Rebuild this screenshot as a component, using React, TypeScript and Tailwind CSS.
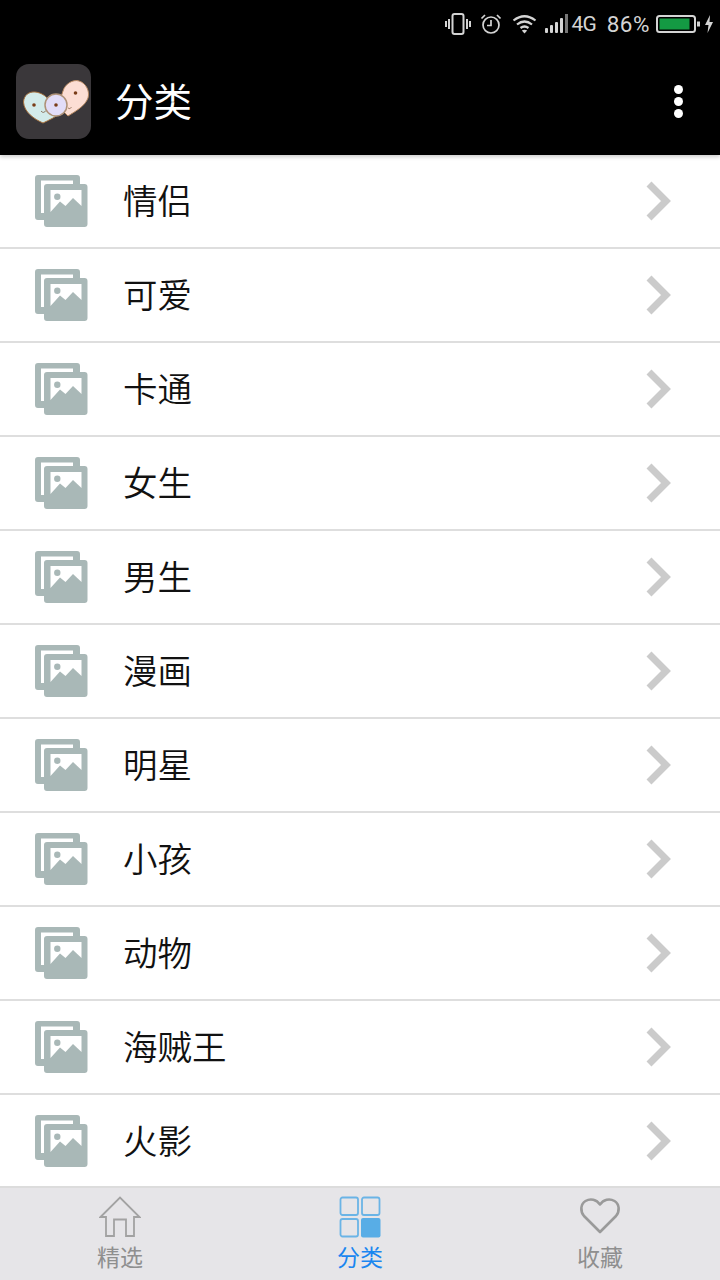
const categories = ['情侣', '可爱', '卡通', '女生', '男生', '漫画', '明星', '小孩', '动物', '海贼王', '火影'];

function PhotosIcon() {
  return (
    <svg width="53" height="53" viewBox="0 0 53 53" className="shrink-0">
      <path fillRule="evenodd" fill="#a9b8b7" d="M3 0H42a3 3 0 0 1 3 3V9H38V5.500H6V38H9V45H3a3 3 0 0 1-3-3V3a3 3 0 0 1 3-3Z" />
      <path fillRule="evenodd" fill="#a9b8b7" d="M12 9H49.500a3 3 0 0 1 3 3V49a3 3 0 0 1-3 3H12a3 3 0 0 1-3-3V12a3 3 0 0 1 3-3ZM15.500 15V37L25 26.500L30.500 31L38 23L46.500 31V15Z" />
      <circle cx="22.300" cy="21.700" r="3.200" fill="#a9b8b7" />
    </svg>
  );
}

function Chevron() {
  return (
    <svg width="28" height="40" viewBox="0 0 28 40" className="shrink-0">
      <path d="M4 3L21 20L4 37" fill="none" stroke="#cbcbcb" strokeWidth="7" />
    </svg>
  );
}

function AppLogo() {
  return (
    <div className="flex h-[75px] w-[75px] shrink-0 items-center justify-center rounded-[13px] bg-[#3a373a]">
      <svg width="75" height="75" viewBox="0 0 75 75">
        <path d="M47 27C49 20 57 15 63 17C70 19 74 27 72 34C69 42 60 47 52 52L42 42Z" fill="#fcded4" stroke="#b98a62" strokeWidth="1" />
        <circle cx="59.500" cy="29" r="1.800" fill="#7a3d18" />
        <path d="M7.500 38C8 31 13 27.500 19 28C25 28.500 30 32 33 36L46 48C40 53 33 56 27 59C18 55 8 48 7.500 38Z" fill="#d3ebea" stroke="#a9733f" strokeWidth="1" />
        <circle cx="18" cy="41" r="1.800" fill="#7a3d18" />
        <path d="M25 47Q27.500 50 30 46.500" fill="none" stroke="#7a5a40" strokeWidth="0.800" />
        <circle cx="40" cy="41" r="11" fill="#e2ddf8" stroke="#ae9278" strokeWidth="1.500" />
        <circle cx="40" cy="41" r="1.800" fill="#7a3d18" />
        <path d="M52 44Q54 46 55.500 43" fill="none" stroke="#8a6a50" strokeWidth="0.800" />
      </svg>
    </div>
  );
}

function StatusBar() {
  return (
    <div className="flex h-[48px] items-center justify-end pr-[6px] font-['Roboto',sans-serif] text-[#d4d4d4]">
      <svg width="26" height="24" viewBox="0 0 26 24" className="mr-[9px]" fill="none" stroke="#d4d4d4">
        <rect x="7.500" y="2" width="11" height="20" rx="2" strokeWidth="2" />
        <path d="M4 7V17M1 9V15M22 7V17M25 9V15" strokeWidth="2" />
      </svg>
      <svg width="22" height="22" viewBox="0 0 22 22" className="mr-[10px]" fill="none" stroke="#d4d4d4" strokeWidth="1.700">
        <circle cx="11" cy="12" r="8" />
        <path d="M11 7V12.500H7M1.500 5.500L5 2M20.500 5.500L17 2" />
      </svg>
      <svg width="25" height="20" viewBox="0 0 25 20" className="mr-[8px]" fill="none" stroke="#d4d4d4" strokeWidth="2.200">
        <path d="M1.500 6.500Q12.500 -2 23.500 6.500M5 10.500Q12.500 4.500 20 10.500M8.500 14Q12.500 11 16.500 14" />
        <path d="M9.800 16.500L12.500 19.500L15.200 16.500Q12.500 15 9.800 16.500Z" fill="#d4d4d4" stroke="none" />
      </svg>
      <svg width="23" height="20" viewBox="0 0 23 20" className="mr-[4px]" fill="#d4d4d4">
        <rect x="0" y="14" width="3" height="5" rx="1" />
        <rect x="5" y="11" width="3" height="8" rx="1" />
        <rect x="10" y="8" width="3" height="11" rx="1" />
        <rect x="15" y="4" width="3" height="15" rx="1" />
        <rect x="20" y="0" width="3" height="19" fill="#777777" />
      </svg>
      <span className="mr-[11px] text-[21px] leading-none tracking-[-1px]">4G</span>
      <span className="mr-[6px] text-[22.500px] leading-none tracking-[0.500px]">86%</span>
      <svg width="44" height="20" viewBox="0 0 44 20" className="mr-[4px]">
        <rect x="1" y="2" width="38" height="16" rx="2.500" fill="none" stroke="#d4d4d4" strokeWidth="2" />
        <rect x="3.500" y="4.500" width="30" height="11" fill="#149a43" />
        <rect x="41" y="7.500" width="3" height="5" fill="#d4d4d4" />
      </svg>
      <svg width="10" height="20" viewBox="0 0 10 20" fill="#d4d4d4">
        <path d="M6 1L1 11H4.500L3.500 19L9 8H5.500Z" />
      </svg>
    </div>
  );
}

function Header() {
  return (
    <header className="relative z-10 h-[155px] shrink-0 bg-black shadow-[0_2px_4px_rgba(0,0,0,0.2)]">
      <StatusBar />
      <div className="flex h-[107px] items-center pl-[16px] pr-[37px]">
        <AppLogo />
        <h1 className="mb-[4px] ml-[24px] text-[38.500px] font-normal leading-none text-white">分类</h1>
        <div className="ml-auto flex flex-col gap-[3px]">
          <span className="h-[9px] w-[9px] rounded-full bg-white" />
          <span className="h-[9px] w-[9px] rounded-full bg-white" />
          <span className="h-[9px] w-[9px] rounded-full bg-white" />
        </div>
      </div>
    </header>
  );
}

function CategoryRow({ name }: { name: string }) {
  return (
    <li className="flex h-[94px] shrink-0 items-center border-b-2 border-[#dedede] pl-[35px] pr-[47px]">
      <PhotosIcon />
      <span className="mb-[4px] ml-[35px] text-[34.500px] font-[350] leading-none text-[#111111]">{name}</span>
      <span className="ml-auto">
        <Chevron />
      </span>
    </li>
  );
}

function TabBar() {
  return (
    <nav className="grid h-[94px] shrink-0 grid-cols-3 border-t-2 border-[#dcdcdc] bg-[#e6e5e8]">
      <div className="flex flex-col items-center pt-[8px]">
        <svg width="42" height="42" viewBox="0 0 42 42" fill="none" stroke="#a2a2a2" strokeWidth="1.800">
          <path d="M1.500 21L21 1.500L40.500 21H35V40H27V23.500H15V40H7V21Z" />
        </svg>
        <span className="mt-[5px] text-[23px] leading-[27px] text-[#8f8f8f]">精选</span>
      </div>
      <div className="flex flex-col items-center pt-[8px]">
        <svg width="42" height="42" viewBox="0 0 42 42" fill="none" stroke="#6ab4e6" strokeWidth="1.800">
          <rect x="1.500" y="1.500" width="17.500" height="17.500" rx="2" />
          <rect x="23" y="1.500" width="17.500" height="17.500" rx="2" />
          <rect x="1.500" y="23" width="17.500" height="17.500" rx="2" />
          <rect x="22" y="22" width="19.500" height="19.500" rx="2" fill="#58ade6" stroke="none" />
        </svg>
        <span className="mt-[5px] text-[23px] leading-[27px] text-[#1a86f0]">分类</span>
      </div>
      <div className="flex flex-col items-center pt-[8px]">
        <svg width="42" height="42" viewBox="0 0 42 42" fill="none" stroke="#9a9a9a" strokeWidth="2.600">
          <path d="M21 36L5 20C1 15 1.500 8 6.500 5C11.500 2 17.500 3.500 21 8.500C24.500 3.500 30.500 2 35.500 5C40.500 8 41 15 37 20Z" strokeLinejoin="round" />
        </svg>
        <span className="mt-[5px] text-[23px] leading-[27px] text-[#8f8f8f]">收藏</span>
      </div>
    </nav>
  );
}

export default function App() {
  return (
    <div className="flex h-[1280px] w-[720px] flex-col overflow-hidden bg-white font-['Noto_Sans_CJK_SC','Noto_Sans',sans-serif]">
      <Header />
      <ul className="flex min-h-0 flex-1 flex-col overflow-hidden">
        {categories.map((name) => (
          <CategoryRow key={name} name={name} />
        ))}
      </ul>
      <TabBar />
    </div>
  );
}
